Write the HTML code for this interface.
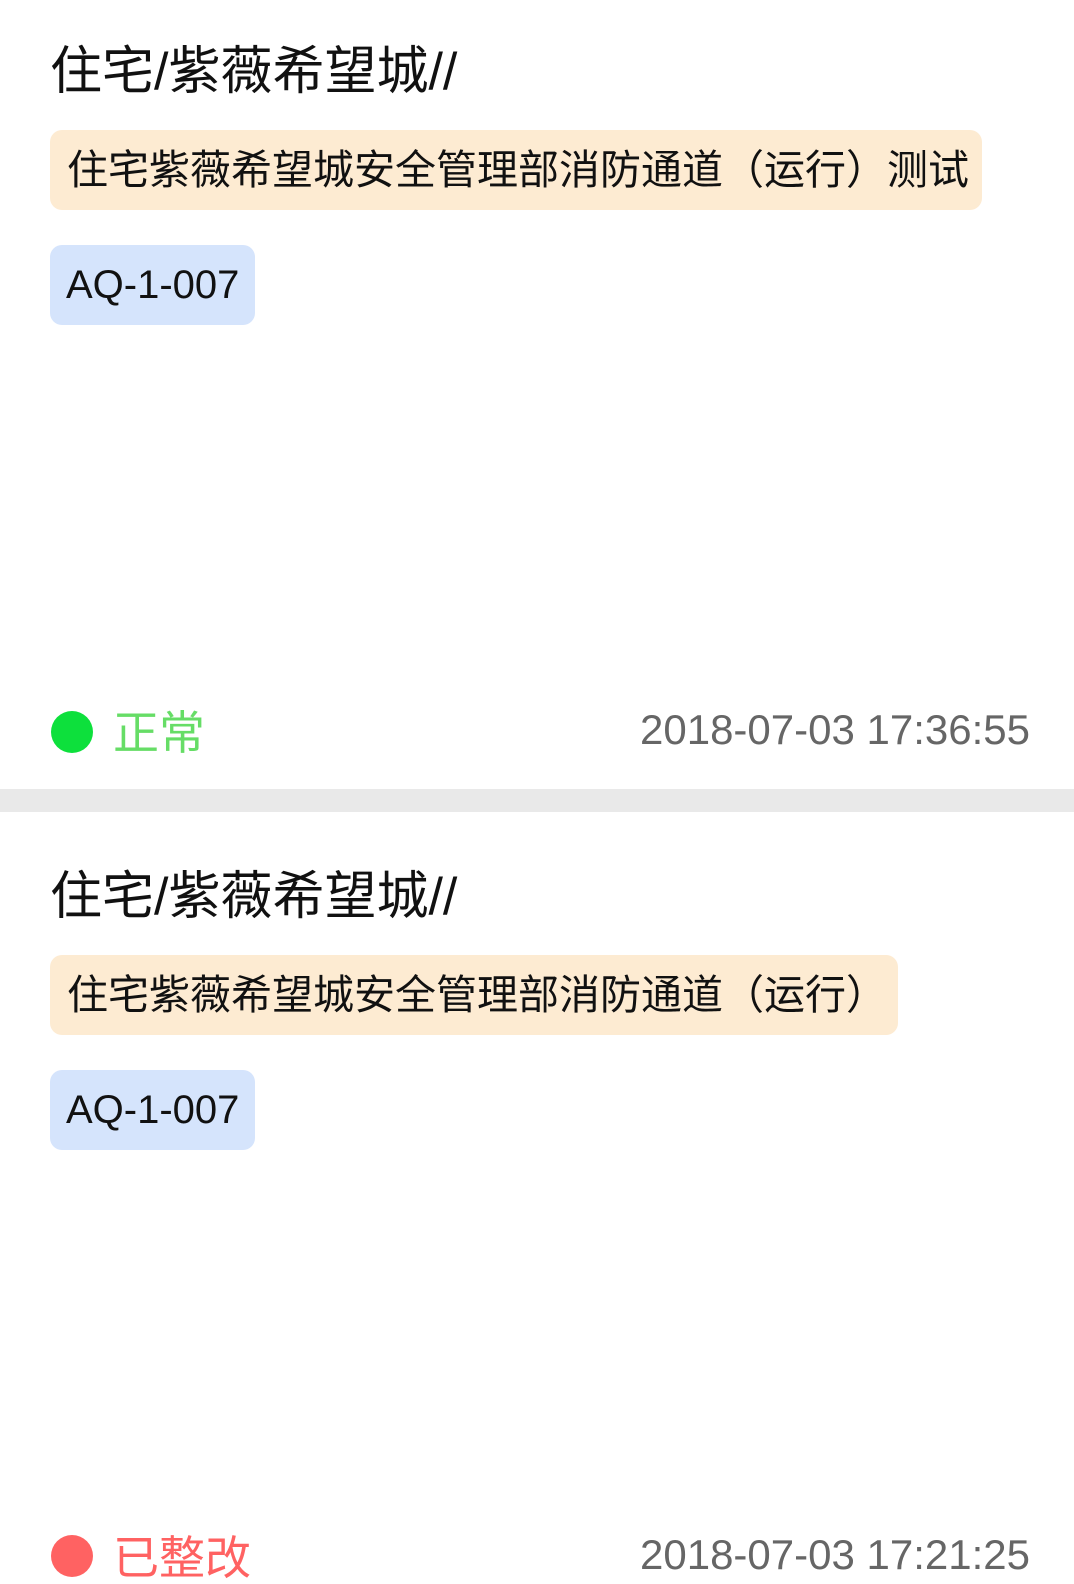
<!DOCTYPE html>
<html><head><meta charset="utf-8"><style>
body{margin:0;width:1074px;height:1551px;overflow:hidden;background:#fff;font-family:"Liberation Sans","Noto Sans CJK SC",sans-serif;position:relative}
.a{position:absolute;white-space:nowrap}
.t{font-size:52px;color:#111;line-height:52px}
.o{background:#fdebd2;border-radius:12px;font-size:41px;line-height:80px;height:80px;padding-left:17px;color:#111}
.b{background:#d5e4fc;border-radius:12px;font-size:40px;line-height:80px;height:80px;padding-left:16px;color:#111;width:189px}
.d{width:42px;height:42px;border-radius:50%}
.s{font-size:46px;line-height:46px}
.dt{font-size:42px;color:#666;right:44px;line-height:42px}
</style></head><body>
<div class="a t" style="left:50px;top:46px">住宅/紫薇希望城//</div>
<div class="a o" style="left:50px;top:130px;width:915px">住宅紫薇希望城安全管理部消防通道（运行）测试</div>
<div class="a b" style="left:50px;top:245px">AQ-1-007</div>
<div class="a d" style="left:51px;top:711px;background:#0de03c"></div>
<div class="a s" style="left:113px;top:710px;color:#66dd66">正常</div>
<div class="a dt" style="top:709px">2018-07-03 17:36:55</div>
<div class="a" style="left:0;top:789px;width:1074px;height:23px;background:#e9e9e9"></div>
<div class="a t" style="left:50px;top:871px">住宅/紫薇希望城//</div>
<div class="a o" style="left:50px;top:955px;width:831px">住宅紫薇希望城安全管理部消防通道（运行）</div>
<div class="a b" style="left:50px;top:1070px">AQ-1-007</div>
<div class="a d" style="left:51px;top:1535px;background:#ff6262"></div>
<div class="a s" style="left:113px;top:1535px;color:#ff6262">已整改</div>
<div class="a dt" style="top:1534px">2018-07-03 17:21:25</div>
</body></html>
